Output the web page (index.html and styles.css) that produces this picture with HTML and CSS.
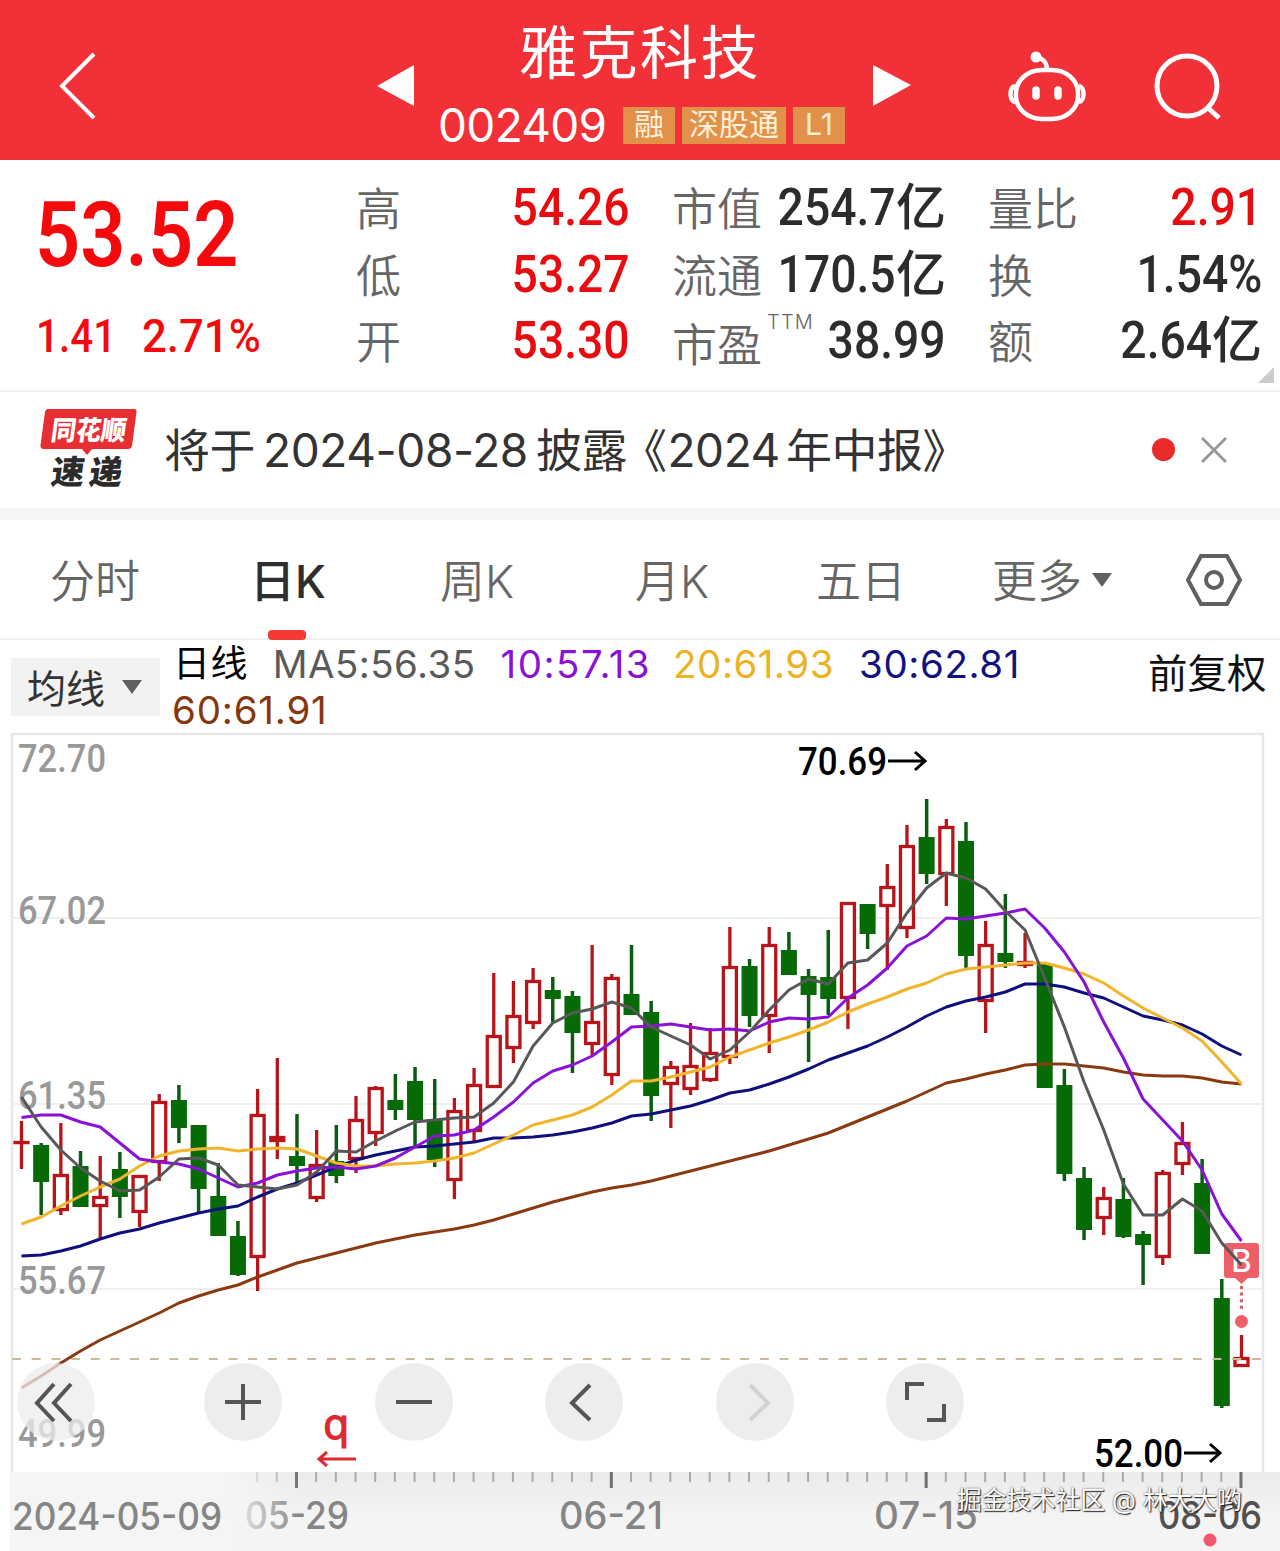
FILE: index.html
```html
<!DOCTYPE html>
<html lang="zh-CN">
<head>
    <meta charset="UTF-8">
    <meta name="viewport" content="width=device-width, initial-scale=1.0">
    <title>雅克科技 002409</title>
    <link rel="stylesheet" href="styles.css">
</head>
<body>

    <!-- Top bar -->
    <header class="top-bar">
        <svg class="back" viewBox="0 0 40 70" width="40" height="70"><path d="M35 3 L3 35 L35 67" /></svg>
        <svg class="prev" viewBox="0 0 38 42" width="38" height="42"><path d="M37 0 V41 L0 21 Z" /></svg>
        <div class="stock">
            <h1 class="stock-name">雅克科技</h1>
            <div class="stock-info">
                <span class="stock-code">002409</span>
                <span class="tag">融</span>
                <span class="tag">深股通</span>
                <span class="tag">L1</span>
            </div>
        </div>
        <svg class="next" viewBox="0 0 38 42" width="38" height="42"><path d="M0 0 V41 L38 20 Z" /></svg>
        <svg class="robot" viewBox="0 0 78 72" width="78" height="72">
            <rect x="8" y="19" width="62" height="49" rx="26" ry="23" />
            <path d="M39 19 C39 12 35 7 28 6" />
            <path d="M7 35 C1 36 1 50 7 51 M71 35 C77 36 77 50 71 51" />
            <circle class="dot" cx="28" cy="6" r="5.5" />
            <path class="eye" d="M28 39 V45 M50 39 V45" />
        </svg>
        <svg class="search" viewBox="0 0 68 68" width="68" height="68">
            <circle cx="33" cy="33" r="30" />
            <path d="M53 54 L65 65" />
        </svg>
    </header>

    <!-- Quote -->
    <section class="quote">
        <div class="price">
            <div class="last num-left">53.52</div>
            <div class="change"><span class="num-left amount">1.41</span><span class="num-left percent">2.71%</span></div>
        </div>
        <dl class="stats stats-day">
            <div><dt>高</dt><dd class="up"><span class="num">54.26</span></dd></div>
            <div><dt>低</dt><dd class="up"><span class="num">53.27</span></dd></div>
            <div><dt>开</dt><dd class="up"><span class="num">53.30</span></dd></div>
        </dl>
        <dl class="stats stats-cap">
            <div><dt>市值</dt><dd><span class="num">254.7</span>亿</dd></div>
            <div><dt>流通</dt><dd><span class="num">170.5</span>亿</dd></div>
            <div><dt class="ttm">市盈<sup>TTM</sup></dt><dd><span class="num">38.99</span></dd></div>
        </dl>
        <dl class="stats stats-vol">
            <div><dt>量比</dt><dd class="up"><span class="num">2.91</span></dd></div>
            <div><dt>换</dt><dd><span class="num">1.54%</span></dd></div>
            <div><dt>额</dt><dd><span class="num">2.64</span>亿</dd></div>
        </dl>
        <span class="corner"></span>
    </section>

    <!-- News line -->
    <section class="news">
        <svg class="news-logo" viewBox="0 0 98 84" width="98" height="84">
            <path d="M8 1 H94 Q97 1 96.500 4 L92 38 Q91.500 41 88 41 H52 L47 47 L42 41 H4 Q0 41 0.500 37 L5 4 Q5.500 1 8 1 Z" />
            <text class="logo-top" transform="translate(10 32) skewX(-8)" textLength="75" lengthAdjust="spacingAndGlyphs">同花顺</text>
            <text class="logo-bottom" transform="translate(10 76) skewX(-8)" textLength="71">速递</text>
        </svg>
        <p class="news-text">将于<span class="date">2024-08-28</span>披露<span class="quote-open">《</span><span class="year">2024</span>年中报》</p>
        <span class="unread"></span>
        <svg class="close" viewBox="0 0 26 26" width="26" height="26"><path d="M1 1 L25 25 M25 1 L1 25" /></svg>
    </section>

    <!-- Period tabs -->
    <nav class="tabs">
        <a>分时</a>
        <a class="active">日K</a>
        <a>周K</a>
        <a>月K</a>
        <a>五日</a>
        <a class="more">更多<i class="caret"></i></a>
        <svg class="settings" viewBox="0 0 56 52" width="56" height="52">
            <path d="M15 2 H41 L54 26 L41 50 H15 L2 26 Z" />
            <circle cx="28" cy="26" r="8" />
        </svg>
    </nav>

    <!-- Moving averages -->
    <section class="averages">
        <button class="ma-button">均线<i class="caret"></i></button>
        <div class="ma-list">
            <span class="ma-title">日线</span>
            <span class="ma5">MA5:56.35</span>
            <span class="ma10">10:57.13</span>
            <span class="ma20">20:61.93</span>
            <span class="ma30">30:62.81</span>
            <span class="ma60">60:61.91</span>
        </div>
        <span class="adjust">前复权</span>
    </section>

    <!-- Chart, drawn in page pixels: y starts at 732 -->
    <section class="chart">
        <svg id="chart" viewBox="0 732 1280 819" width="1280" height="819">
            <defs>
                <linearGradient id="axisShade" x1="0" y1="0" x2="0" y2="1">
                    <stop offset="0" stop-color="#ebebeb" />
                    <stop offset="0.6" stop-color="#f4f4f4" />
                    <stop offset="1" stop-color="#f5f5f5" />
                </linearGradient>
                <linearGradient id="axisFade" x1="0" y1="0" x2="1" y2="0">
                    <stop offset="0" stop-color="#f5f5f5" />
                    <stop offset="0.75" stop-color="#f5f5f5" />
                    <stop offset="1" stop-color="#f5f5f5" stop-opacity="0" />
                </linearGradient>
            </defs>
            <path class="frame" d="M12 1472 V734 H1263 V1472" />
            <path class="grid" d="M12 918 H1263 M12 1104 H1263 M12 1289 H1263" />
            <g class="price-labels">
                <text x="18" y="772" textLength="88" lengthAdjust="spacingAndGlyphs">72.70</text>
                <text x="18" y="924" textLength="88" lengthAdjust="spacingAndGlyphs">67.02</text>
                <text x="18" y="1109" textLength="88" lengthAdjust="spacingAndGlyphs">61.35</text>
                <text x="18" y="1294" textLength="88" lengthAdjust="spacingAndGlyphs">55.67</text>
                <text x="18" y="1447" textLength="88" lengthAdjust="spacingAndGlyphs">49.99</text>
            </g>
            <g id="candles"></g>
            <path class="last-price" d="M12 1359 H1263" />

            <g class="buy">
                <path d="M1227 1243 H1256 Q1259 1243 1259 1246 V1275 Q1259 1278 1256 1278 H1248 L1241.500 1284 L1235 1278 H1227 Q1224 1278 1224 1275 V1246 Q1224 1243 1227 1243 Z" />
                <text x="1241.500" y="1272" text-anchor="middle">B</text>
                <path class="buy-dots" d="M1241.500 1286 V1312" />
                <circle cx="1241.500" cy="1321.500" r="6.500" />
            </g>
            <g id="lines"></g>

            <rect x="10" y="1472" width="1270" height="79" fill="url(#axisShade)" />
            <g id="ticks"></g>
            <g class="extremes">
                <text x="798" y="775" textLength="89" lengthAdjust="spacingAndGlyphs">70.69</text>
                <path d="M888 761 H925 M915 752 L925 761 L915 770" />
                <text x="1094" y="1467" textLength="89" lengthAdjust="spacingAndGlyphs">52.00</text>
                <path d="M1184 1453 H1220 M1210 1444 L1220 1453 L1210 1462" />
            </g>
            <g class="event">
                <text x="323" y="1439">q</text>
                <path d="M356 1459 H319 M327 1452 L319 1459 L327 1466" />
            </g>
            <g class="dates">
                <text x="245" y="1529" textLength="104" lengthAdjust="spacingAndGlyphs">05-29</text>
                <rect x="10" y="1472" width="290" height="79" fill="url(#axisFade)" />
                <text x="12" y="1530" textLength="210" lengthAdjust="spacingAndGlyphs">2024-05-09</text>
                <text x="559" y="1529" textLength="104" lengthAdjust="spacingAndGlyphs">06-21</text>
                <text x="874" y="1529" textLength="104" lengthAdjust="spacingAndGlyphs">07-15</text>
                <text class="today" x="1158" y="1529" textLength="104" lengthAdjust="spacingAndGlyphs">08-06</text>
            </g>
            <circle class="event-dot" cx="1210" cy="1540" r="6.500" />
        </svg>

        <div class="controls">
            <button class="round first"><svg viewBox="0 0 78 78"><path d="M37 21 L20 40 L37 58 M54 21 L37 40 L54 58" /></svg></button>
            <button class="round"><svg viewBox="0 0 78 78"><path d="M21 39 H57 M39 21 V57" /></svg></button>
            <button class="round"><svg viewBox="0 0 78 78"><path d="M21 39 H57" /></svg></button>
            <button class="round"><svg viewBox="0 0 78 78"><path d="M45 22 L27 40 L45 57" /></svg></button>
            <button class="round disabled"><svg viewBox="0 0 78 78"><path d="M34 22 L52 40 L34 57" /></svg></button>
            <button class="round"><svg viewBox="0 0 78 78"><path d="M21 37 V21 H38 M58 41 V57 H41" /></svg></button>
        </div>
        <span class="watermark">掘金技术社区 @ 林大大哟</span>
    </section>

    <script src="script.js"></script>
</body>
</html>
```

FILE: styles.css
```css
* {
    box-sizing: border-box;
}

body {
    margin: 0;
    width: 1280px;
    background: #fff;
    color: #333;
    font-family: Inter, "Noto Sans CJK SC", sans-serif;
    overflow-x: hidden;
}

svg {
    display: block;
    fill: none;
}

button {
    border: none;
    padding: 0;
    font-family: inherit;
}

/* Top bar */
.top-bar {
    display: grid;
    grid-template-columns: 318px 61px 435px 137px 145px 68px;
    align-items: center;
    height: 160px;
    padding: 11px 0 0 59px;
    background: #f23037;
}

.back,
.robot,
.search {
    stroke: #fff;
    stroke-width: 4.5;
}

.back {
    stroke-width: 4;
}

.robot {
    margin: 2px 0 0 -2px;
}

.robot .dot,
.prev,
.next {
    fill: #fff;
    stroke: none;
}

.robot .eye {
    stroke-width: 7.5;
    stroke-linecap: round;
}

.search {
    margin: 3px 0 0 -1px;
    stroke-width: 5;
}

.stock {
    align-self: start;
    margin-top: -11px;
    color: #fff;
    white-space: nowrap;
}

.stock-name {
    margin: 0;
    padding: 18px 0 0 81px;
    height: 103px;
    font-size: 58px;
    font-weight: 400;
    line-height: 70px;
    letter-spacing: 2.5px;
}

.stock-info {
    display: flex;
    align-items: center;
    gap: 7px;
    height: 44px;
}

.stock-code {
    width: 178px;
    font-size: 46px;
    font-weight: 400;
    letter-spacing: -0.7px;
}

.tag {
    padding: 0 7px;
    height: 37px;
    background: #e2914b;
    color: #fff0d8;
    font-size: 30px;
    line-height: 35px;
    min-width: 52px;
    text-align: center;
}

.stock-code + .tag {
    padding: 0 11px;
}

/* Quote */
.quote {
    position: relative;
    display: flex;
    height: 232px;
    padding: 13px 0 0 36px;
    border-bottom: 2px solid #f0f0f0;
}

.price {
    width: 320px;
    color: #f40a0c;
}

.num,
.num-left {
    display: inline-block;
    font-family: Roboto, sans-serif;
    transform: scaleX(0.89);
    transform-origin: right;
}

.num-left {
    transform-origin: left;
}

.last {
    display: block;
    height: 129px;
    margin-left: -1px;
    font-size: 91px;
    font-weight: 600;
    line-height: 124px;
    transform: scaleX(0.87);
}

.change {
    display: flex;
    font-size: 47px;
    font-weight: 500;
    line-height: 68px;
}

.amount {
    width: 106px;
    transform: scaleX(0.86);
}

.change .percent {
    transform: scaleX(0.93);
}

.stats {
    margin: 0;
}

.stats div {
    display: flex;
    justify-content: space-between;
    height: 66.5px;
    line-height: 68px;
}

.stats-day {
    width: 274px;
}

.stats-cap {
    width: 274px;
    margin-left: 42px;
}

.stats-vol {
    width: 274px;
    margin-left: 42px;
}

.stats dt {
    padding-top: 3px;
    font-size: 45px;
    font-weight: 350;
    color: #666;
}

.stats dd {
    margin: 0;
    font-size: 50px;
    font-weight: 500;
    color: #2c2c2c;
    white-space: nowrap;
}

.stats .num {
    font-size: 52px;
}

.stats .up {
    color: #e80c10;
}

.stats .ttm {
    display: flex;
    padding-top: 6px;
}

.ttm sup {
    margin: -24px 0 0 5px;
    width: 0;
    font-size: 20px;
    letter-spacing: 1.2px;
    line-height: 68px;
}

.corner {
    position: absolute;
    right: 6px;
    bottom: 7px;
    border: 8px solid;
    border-color: transparent #ccc #ccc transparent;
}

/* News line */
.news {
    display: flex;
    align-items: center;
    height: 128px;
    padding-left: 40px;
    border-bottom: 12px solid #f5f5f5;
}

.news-logo path {
    fill: #e62e33;
}

.logo-top,
.logo-bottom {
    fill: #fff;
    font-size: 27px;
    font-weight: 900;
}

.logo-bottom {
    fill: #2b2b2b;
    font-size: 33px;
}

.news-text {
    margin: -7px 0 0;
    width: 1014px;
    padding-left: 26px;
    font-size: 46px;
    font-weight: 400;
    letter-spacing: -0.5px;
    white-space: nowrap;
}

.date {
    margin: 0 8px 0 8px;
    font-size: 46px;
    letter-spacing: -0.4px;
}

.quote-open {
    margin-left: -6px;
}

.year {
    margin: 0 6px 0 1px;
    font-size: 46px;
    letter-spacing: -0.4px;
}

.unread {
    width: 23px;
    height: 23px;
    margin-top: -2px;
    border-radius: 50%;
    background: #ea2b2b;
}

.close {
    margin: -1px 0 0 26px;
    stroke: #999;
    stroke-width: 3;
}

/* Period tabs */
.tabs {
    display: grid;
    grid-template-columns: 203px 187px 195px 181px 176px 193px 56px;
    align-items: center;
    height: 120px;
    padding-left: 51px;
    border-bottom: 2px solid #efefef;
    font-size: 45px;
    font-weight: 350;
    color: #666;
}

.tabs a {
    margin: -2px 0 0 -1px;
}

.tabs .active {
    position: relative;
    margin-left: -4px;
    font-weight: 500;
    color: #2e2e2e;
}

.active::after {
    content: "";
    position: absolute;
    left: 18px;
    bottom: -29px;
    width: 38px;
    height: 10px;
    border-radius: 4px;
    background: #f43b33;
}

.caret {
    display: inline-block;
    border: 10px solid transparent;
    border-top: 14px solid #606060;
    border-bottom: none;
}

.more .caret {
    margin-left: 10px;
    vertical-align: 11px;
}

.settings {
    margin-top: 2px;
    stroke: #606060;
    stroke-width: 4;
}

/* Moving averages */
.averages {
    display: flex;
    height: 92px;
    padding-left: 11px;
}

.ma-button {
    display: flex;
    align-items: center;
    width: 149px;
    height: 58px;
    margin-top: 18px;
    padding: 0 0 3px 16px;
    background: #f2f2f2;
    color: #333;
    font-size: 39px;
}

.ma-button .caret {
    margin: 3px 0 0 17px;
}

.ma-list {
    display: flex;
    flex-wrap: wrap;
    align-content: flex-start;
    width: 988px;
    padding-left: 12px;
    font-size: 38.5px;
    line-height: 46px;
    letter-spacing: 0.4px;
}

.ma-list span {
    margin-top: 1px;
    margin-right: 25px;
}

.ma-list .ma-title {
    margin-top: 1px;
    margin-left: 1px;
    color: #000;
    font-size: 37px;
}

.ma5 {
    color: #5a5a5a;
}

.ma10 {
    color: #8a12d6;
    letter-spacing: 1.5px;
}

.ma-list .ma10 {
    margin-right: 22px;
}

.ma20 {
    color: #ebb222;
    letter-spacing: 0.5px;
}

.ma30 {
    color: #12127f;
    letter-spacing: 0.6px;
}

.ma-list .ma60 {
    margin-top: 0;
    color: #86360c;
    letter-spacing: 0.8px;
}

.adjust {
    width: 120px;
    padding-top: 11px;
    color: #111;
    font-size: 39.5px;
    line-height: 46px;
    white-space: nowrap;
}

/* Chart */
.chart {
    position: relative;
    height: 819px;
    overflow: hidden;
}

.frame,
.grid {
    stroke: #e6e8e8;
    stroke-width: 2.5;
}

.grid {
    stroke: #efefef;
    stroke-width: 2;
}

.price-labels,
.extremes {
    font-family: Roboto, sans-serif;
    font-size: 38px;
}

.price-labels {
    fill: #999;
    font-weight: 500;
}

.dates {
    fill: #858585;
    font-size: 38px;
    font-weight: 500;
}

.dates .today {
    fill: #505050;
}

.candle-up {
    stroke: #b8141a;
    stroke-width: 3.3;
}

.candle-up rect {
    fill: #fff;
}

.candle-down {
    stroke: #0b5c12;
    stroke-width: 3.5;
}

.candle-down rect {
    fill: #066b06;
    stroke: none;
}

.line {
    stroke-width: 3;
    stroke-linejoin: round;
}

.line-ma5 {
    stroke: #585858;
}

.line-ma10 {
    stroke: #8a12d6;
}

.line-ma20 {
    stroke: #f0b52b;
}

.line-ma30 {
    stroke: #10107c;
}

.line-ma60 {
    stroke: #8a3a10;
}

.last-price {
    stroke: #c9ba98;
    stroke-width: 2;
    stroke-dasharray: 9 10.68;
}

.buy path,
.buy circle {
    fill: #ee6069;
}

.buy text {
    fill: #fff;
    font-size: 31px;
    font-weight: 500;
}

.buy .buy-dots {
    stroke: #d75a64;
    stroke-width: 3;
    stroke-dasharray: 3 3.6;
}

.tick {
    stroke: #aaa;
    stroke-width: 2;
}

.tick-major {
    stroke: #707070;
    stroke-width: 3;
}

.extremes text {
    fill: #000;
    font-weight: 500;
}

.extremes path {
    stroke: #000;
    stroke-width: 3;
}

.event {
    fill: #dd2930;
    font-family: "DejaVu Sans", sans-serif;
    font-size: 42px;
}

.event text {
    stroke: #dd2930;
}

.event path {
    fill: none;
    stroke: #dd2930;
    stroke-width: 3;
}

.event-dot {
    fill: #f2586c;
}

/* Round buttons over the chart */
.controls {
    position: absolute;
    left: 17px;
    top: 631px;
    display: flex;
    gap: 92.6px;
}

.round {
    width: 78px;
    height: 78px;
    border-radius: 50%;
    background: rgba(235, 235, 235, 0.9);
}

.round svg {
    stroke: #555;
    stroke-width: 4;
}

.first {
    margin-right: 16.4px;
    background: rgba(238, 236, 236, 0.75);
}

.disabled svg {
    stroke: #d2d2d2;
}

.watermark {
    position: absolute;
    left: 957px;
    top: 749px;
    color: #fff;
    font-size: 24.7px;
    line-height: 38px;
    white-space: nowrap;
    text-shadow: 1px 1px 1px #222, 0 0 2px #444;
}
```

FILE: script.js
```js
const svgNS = "http://www.w3.org/2000/svg";
const firstX = 21.5;
const step = 19.677;

// direction, high, body top, body bottom, low
const candles = [
    ["up", 1121, 1141, 1143, 1169], ["down", 1143, 1145, 1182, 1215], ["up", 1123, 1174, 1211, 1215],
    ["down", 1151, 1166, 1207, 1207], ["up", 1156, 1196, 1207, 1238], ["down", 1152, 1169, 1197, 1218],
    ["up", 1175, 1175, 1213, 1227], ["up", 1094, 1101, 1163, 1181], ["down", 1085, 1100, 1128, 1143],
    ["down", 1125, 1125, 1189, 1213], ["down", 1163, 1196, 1236, 1236], ["down", 1221, 1236, 1275, 1276],
    ["up", 1089, 1114, 1258, 1291], ["up", 1058, 1136, 1142, 1159], ["down", 1114, 1156, 1166, 1182],
    ["up", 1130, 1164, 1199, 1202], ["down", 1125, 1161, 1176, 1183], ["up", 1096, 1119, 1160, 1173],
    ["up", 1086, 1087, 1134, 1146], ["down", 1074, 1100, 1110, 1120], ["down", 1067, 1081, 1120, 1147],
    ["down", 1079, 1119, 1160, 1167], ["up", 1098, 1110, 1181, 1199], ["up", 1068, 1084, 1132, 1141],
    ["up", 973, 1035, 1088, 1088], ["up", 981, 1015, 1049, 1063], ["up", 968, 980, 1024, 1029],
    ["down", 977, 990, 999, 1023], ["down", 991, 996, 1033, 1073], ["up", 945, 1021, 1045, 1055],
    ["up", 974, 977, 1076, 1085], ["down", 945, 994, 1015, 1015], ["down", 1001, 1012, 1096, 1121],
    ["up", 1061, 1066, 1085, 1128], ["up", 1023, 1065, 1090, 1095], ["up", 1028, 1052, 1081, 1082],
    ["up", 927, 966, 1058, 1064], ["down", 959, 966, 1016, 1027], ["up", 927, 944, 1017, 1053],
    ["down", 932, 950, 975, 975], ["down", 969, 976, 995, 1062], ["down", 930, 977, 999, 1015],
    ["up", 902, 902, 999, 1029], ["down", 904, 904, 934, 949], ["up", 864, 886, 907, 970],
    ["up", 825, 845, 929, 938], ["down", 799, 837, 874, 884], ["up", 819, 826, 875, 906],
    ["down", 822, 841, 956, 968], ["up", 921, 944, 1002, 1033], ["down", 894, 953, 962, 968],
    ["up", 933, 961, 966, 968], ["down", 964, 964, 1088, 1088], ["down", 1069, 1085, 1174, 1181],
    ["down", 1167, 1178, 1230, 1240], ["up", 1187, 1197, 1219, 1235], ["down", 1178, 1199, 1237, 1238],
    ["down", 1231, 1234, 1245, 1285], ["up", 1170, 1172, 1258, 1265], ["up", 1122, 1142, 1165, 1175],
    ["down", 1159, 1183, 1254, 1254], ["down", 1279, 1298, 1406, 1408], ["up", 1335, 1357, 1367, 1367]
];

const averages = {
    ma60: [1388, 1376, 1363, 1351, 1340, 1331, 1322, 1313, 1303, 1296, 1290, 1285, 1277, 1270, 1263, 1258,
        1253, 1248, 1243, 1239, 1235, 1232, 1229, 1225, 1220, 1214, 1208, 1202, 1197, 1192, 1188, 1185, 1181,
        1176, 1171, 1166, 1161, 1156, 1151, 1145, 1139, 1133, 1125, 1117, 1109, 1101, 1092, 1083, 1079, 1074,
        1070, 1065, 1064, 1064, 1066, 1068, 1072, 1075, 1076, 1076, 1078, 1082, 1084],
    ma30: [1256, 1255, 1251, 1246, 1239, 1233, 1229, 1223, 1218, 1213, 1209, 1206, 1197, 1189, 1183, 1175,
        1167, 1160, 1155, 1151, 1147, 1146, 1144, 1142, 1138, 1138, 1137, 1135, 1132, 1128, 1123, 1116, 1114,
        1110, 1106, 1100, 1093, 1090, 1084, 1077, 1069, 1060, 1053, 1046, 1037, 1027, 1016, 1007, 1001, 997,
        992, 984, 984, 987, 993, 998, 1007, 1016, 1020, 1025, 1034, 1046, 1055],
    ma20: [1224, 1217, 1206, 1196, 1187, 1179, 1166, 1156, 1151, 1149, 1148, 1151, 1149, 1148, 1149, 1156,
        1163, 1166, 1166, 1164, 1163, 1161, 1158, 1153, 1144, 1135, 1125, 1120, 1115, 1107, 1095, 1081, 1081,
        1077, 1072, 1067, 1057, 1050, 1043, 1037, 1030, 1022, 1012, 1004, 997, 989, 983, 974, 969, 967,
        965, 963, 963, 968, 974, 983, 996, 1008, 1018, 1028, 1041, 1062, 1084],
    ma10: [1117.5, 1115, 1115, 1122, 1127, 1143, 1159, 1162, 1164, 1169, 1178, 1187, 1183, 1175, 1171, 1168,
        1167, 1169, 1166, 1158, 1147, 1136, 1135, 1130, 1117, 1102, 1083, 1071, 1065, 1056, 1042, 1027, 1026,
        1024, 1027, 1030, 1029, 1031, 1022, 1018, 1019, 1017, 998, 985, 968, 946, 936, 918, 919, 916,
        913, 909, 928, 952, 982, 1022, 1058, 1099, 1120, 1141, 1170, 1214, 1241],
    ma5: [1097, 1127, 1150, 1168, 1181, 1191, 1190, 1177, 1159, 1158, 1165, 1185, 1187, 1189, 1185, 1172,
        1151, 1152, 1141, 1131, 1122, 1120, 1118, 1117, 1103, 1082, 1046, 1023, 1013, 1009, 1002, 1008, 1027,
        1036, 1045, 1059, 1050, 1032, 1010, 990, 979, 984, 963, 960, 943, 913, 888, 873, 878, 889,
        911, 930, 978, 1027, 1082, 1130, 1184, 1215, 1215, 1199, 1211, 1243, 1265]
};

function add(parent, name, attributes) {
    const element = document.createElementNS(svgNS, name);
    for (const key in attributes) {
        element.setAttribute(key, attributes[key]);
    }
    parent.appendChild(element);
    return element;
}

function drawCandles() {
    const layer = document.getElementById("candles");
    candles.forEach(([direction, high, top, bottom, low], i) => {
        const x = firstX + i * step;
        const group = add(layer, "g", { class: "candle-" + direction });
        add(group, "path", { d: `M${x} ${high} V${low}` });
        if (direction === "up") {
            // the outline is kept inside the body
            add(group, "rect", { x: x - 6.5, y: top + 1.5, width: 13, height: Math.max(bottom - top - 3, 0.1) });
        } else {
            add(group, "rect", { x: x - 8, y: top, width: 16, height: bottom - top });
        }
    });
}

function drawLines() {
    const layer = document.getElementById("lines");
    for (const name in averages) {
        const points = averages[name].map((y, i) => `${firstX + i * step},${y}`).join(" ");
        add(layer, "polyline", { class: "line line-" + name, points: points });
    }
}

function drawTicks() {
    const layer = document.getElementById("ticks");
    for (let i = 12; i < candles.length; i++) {
        const major = i % 16 === 14;
        const x = firstX + i * step - 0.5;
        add(layer, "path", { class: major ? "tick tick-major" : "tick", d: `M${x} 1472 V${major ? 1488 : 1482}` });
    }
}

drawCandles();
drawLines();
drawTicks();
```
